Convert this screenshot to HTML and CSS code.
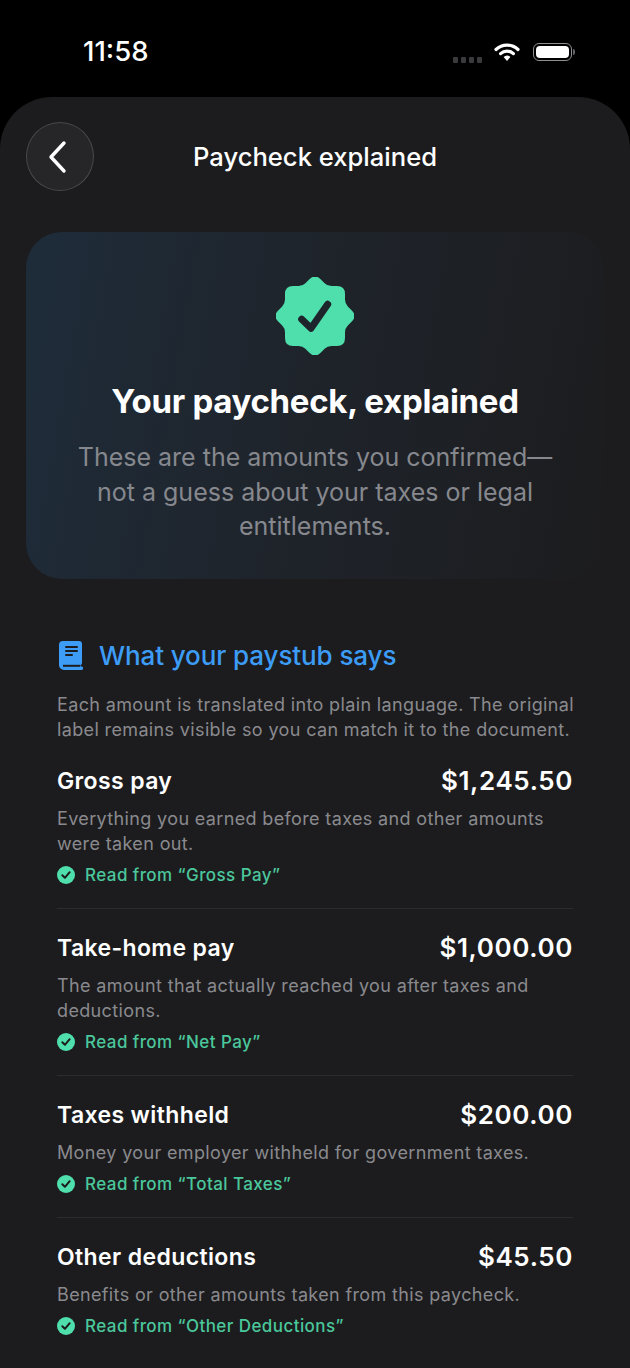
FILE: index.html
```html
<!DOCTYPE html>
<html lang="en">
<head>
    <meta charset="UTF-8">
    <meta name="viewport" content="width=device-width, initial-scale=1.0">
    <title>Paycheck explained</title>
    <link rel="stylesheet" href="styles.css">
</head>
<body>
    <div class="status-bar">
        <span class="time">11:58</span>
        <div class="status-icons">
            <div class="signal"><i></i><i></i><i></i><i></i></div>
            <svg class="wifi" width="26" height="20" viewBox="0 0 26 20">
                <path d="M2 7.500a16 16 0 0 1 22 0" fill="none" stroke="#fff" stroke-width="3.200" stroke-linecap="round"/>
                <path d="M6.600 11.600a9.500 9.500 0 0 1 12.800 0" fill="none" stroke="#fff" stroke-width="3.200" stroke-linecap="round"/>
                <path d="M9.600 15 13 19l3.400-4a5 5 0 0 0-6.800 0z" fill="#fff"/>
            </svg>
            <div class="battery"><div class="battery-fill"></div></div>
            <div class="battery-cap"></div>
        </div>
    </div>

    <main class="sheet">
        <header class="nav">
            <button class="back">
                <svg width="24" height="34" viewBox="0 0 24 34"><path d="M18 3 5 17l13 14" fill="none" stroke="#fff" stroke-width="3.400" stroke-linecap="round" stroke-linejoin="round"/></svg>
            </button>
            <h1 class="nav-title">Paycheck explained</h1>
        </header>

        <section class="hero">
            <svg class="badge" width="78" height="78" viewBox="0 0 78 78">
                <path d="M61 69Q69 69 69 61L69 55.400Q69 51.400 71.800 48.600L75.800 44.600Q81.400 39 75.800 33.400L71.800 29.400Q69 26.600 69 22.600L69 17Q69 9 61 9L55.400 9Q51.400 9 48.600 6.200L44.600 2.200Q39 -3.400 33.400 2.200L29.400 6.200Q26.600 9 22.600 9L17 9Q9 9 9 17L9 22.600Q9 26.600 6.200 29.400L2.200 33.400Q-3.400 39 2.200 44.600L6.200 48.600Q9 51.400 9 55.400L9 61Q9 69 17 69L22.600 69Q26.600 69 29.400 71.800L33.400 75.800Q39 81.400 44.600 75.800L48.600 71.800Q51.400 69 55.400 69Z" fill="#4fdfad"/>
                <path d="M25.700 42.300 35 51.300 51.700 27.300" fill="none" stroke="#1e242b" stroke-width="7" stroke-linecap="round" stroke-linejoin="round"/>
            </svg>
            <h2 class="hero-title">Your paycheck, explained</h2>
            <p class="hero-text">These are the amounts you confirmed—<br>not a guess about your taxes or legal<br>entitlements.</p>
        </section>

        <section class="paystub">
            <div class="section-head">
                <svg width="24" height="29" viewBox="0 0 24 29">
                    <path d="M4 0h16a3 3 0 0 1 3 3v19a2 2 0 0 1-1.500 2v1.500h1a1.500 1.500 0 0 1 0 3.500H5a5 5 0 0 1-5-5V4a4 4 0 0 1 4-4z" fill="#3d9df6"/>
                    <path d="M7 6h11M7 10h11M7 14h6" stroke="#1c1c1e" stroke-width="2" stroke-linecap="round"/>
                    <path d="M4 24.800h17" stroke="#1c1c1e" stroke-width="2"/>
                </svg>
                <h3 class="section-title">What your paystub says</h3>
            </div>
            <p class="section-text">Each amount is translated into plain language. The original<br>label remains visible so you can match it to the document.</p>

            <div class="item">
                <div class="item-top"><span class="item-name">Gross pay</span><span class="item-amount">$1,245.50</span></div>
                <p class="item-text">Everything you earned before taxes and other amounts were taken out.</p>
                <div class="source">
                    <svg width="18" height="18" viewBox="0 0 18 18"><circle cx="9" cy="9" r="9" fill="#4fdfad"/><path d="M5.300 9.300 7.900 11.800 12.700 6.200" fill="none" stroke="#1c1c1e" stroke-width="2" stroke-linecap="round" stroke-linejoin="round"/></svg>
                    <span>Read from “Gross Pay”</span>
                </div>
            </div>

            <div class="item">
                <div class="item-top"><span class="item-name">Take-home pay</span><span class="item-amount">$1,000.00</span></div>
                <p class="item-text">The amount that actually reached you after taxes and deductions.</p>
                <div class="source">
                    <svg width="18" height="18" viewBox="0 0 18 18"><circle cx="9" cy="9" r="9" fill="#4fdfad"/><path d="M5.300 9.300 7.900 11.800 12.700 6.200" fill="none" stroke="#1c1c1e" stroke-width="2" stroke-linecap="round" stroke-linejoin="round"/></svg>
                    <span>Read from “Net Pay”</span>
                </div>
            </div>

            <div class="item">
                <div class="item-top"><span class="item-name">Taxes withheld</span><span class="item-amount">$200.00</span></div>
                <p class="item-text">Money your employer withheld for government taxes.</p>
                <div class="source">
                    <svg width="18" height="18" viewBox="0 0 18 18"><circle cx="9" cy="9" r="9" fill="#4fdfad"/><path d="M5.300 9.300 7.900 11.800 12.700 6.200" fill="none" stroke="#1c1c1e" stroke-width="2" stroke-linecap="round" stroke-linejoin="round"/></svg>
                    <span>Read from “Total Taxes”</span>
                </div>
            </div>

            <div class="item">
                <div class="item-top"><span class="item-name">Other deductions</span><span class="item-amount">$45.50</span></div>
                <p class="item-text">Benefits or other amounts taken from this paycheck.</p>
                <div class="source">
                    <svg width="18" height="18" viewBox="0 0 18 18"><circle cx="9" cy="9" r="9" fill="#4fdfad"/><path d="M5.300 9.300 7.900 11.800 12.700 6.200" fill="none" stroke="#1c1c1e" stroke-width="2" stroke-linecap="round" stroke-linejoin="round"/></svg>
                    <span>Read from “Other Deductions”</span>
                </div>
            </div>
        </section>
    </main>
</body>
</html>
```

FILE: styles.css
```css
html, body {
    margin: 0;
    height: 1368px;
    overflow: hidden;
}
body {
    font-family: Inter, "Liberation Sans", sans-serif;
    background-color: #000;
    color: #fff;
}
h1, h2, h3, p {
    margin: 0;
}
.status-bar {
    height: 97px;
    display: flex;
    justify-content: space-between;
    align-items: flex-start;
    padding: 0 55px 0 83px;
    box-sizing: border-box;
}
.time {
    margin-top: 36px;
    font-size: 27.500px;
    line-height: 30px;
    font-weight: 500;
}
.status-icons {
    display: flex;
    align-items: center;
    margin-top: 41px;
}
.signal {
    display: flex;
    gap: 3px;
    margin: 16px 12px 0 0;
}
.signal i {
    width: 5px;
    height: 6px;
    border-radius: 1px;
    background: #3a3a3c;
}
.wifi {
    margin-right: 13px;
}
.battery {
    border: 1.500px solid #8e8e93;
    border-radius: 6px;
    padding: 2px;
    width: 33px;
    height: 12px;
}
.battery-fill {
    width: 100%;
    height: 100%;
    background: #fff;
    border-radius: 4px;
}
.battery-cap {
    width: 2px;
    height: 6px;
    margin-left: 1px;
    background: #636366;
    border-radius: 0 2px 2px 0;
}
.sheet {
    height: 1271px;
    background: #1c1c1e;
    border-radius: 52px 52px 0 0;
    padding: 25px 26px 0;
    box-sizing: border-box;
}
.nav {
    display: flex;
    align-items: center;
    position: relative;
    height: 69px;
}
.back {
    width: 68px;
    height: 69px;
    border-radius: 50%;
    border: 1px solid #48484a;
    background: #262628;
    display: flex;
    align-items: center;
    justify-content: center;
    padding: 0 4px 0 0;
}
.nav-title {
    position: absolute;
    left: 0;
    right: 0;
    text-align: center;
    font-size: 25.600px;
    font-weight: 500;
    pointer-events: none;
}
.hero {
    margin-top: 41px;
    height: 347px;
    box-sizing: border-box;
    padding-top: 45px;
    border-radius: 36px;
    background: linear-gradient(100deg, #1e2c3a 0%, #1f252d 40%, #1c1c1e 100%);
    text-align: center;
    display: flex;
    flex-direction: column;
    align-items: center;
}
.hero-title {
    margin-top: 24px;
    font-size: 33px;
    line-height: 44px;
    font-weight: 700;
    letter-spacing: -0.300px;
}
.hero-text {
    margin-top: 17px;
    font-size: 25px;
    line-height: 34.500px;
    color: #86888e;
}
.paystub {
    margin-top: 58px;
    padding: 0 31px;
}
.section-head {
    display: flex;
    align-items: center;
    gap: 16px;
    padding-left: 2px;
    height: 36px;
}
.section-title {
    font-size: 26px;
    font-weight: 500;
    letter-spacing: -0.100px;
    color: #3d9df6;
}
.section-text {
    margin-top: 19px;
    font-size: 18px;
    line-height: 25px;
    letter-spacing: 0.360px;
    white-space: nowrap;
    color: #8a8a8e;
}
.item {
    padding: 23px 0 23px;
    border-bottom: 1px solid #2c2c2e;
}
.item:first-of-type {
    padding-top: 17px;
}
.item:last-child {
    border-bottom: 0;
}
.item-top {
    display: flex;
    justify-content: space-between;
    align-items: center;
}
.item-name {
    font-size: 23px;
    font-weight: 600;
    letter-spacing: 0.380px;
}
.item-amount {
    font-size: 26px;
    font-weight: 600;
    letter-spacing: 0.600px;
}
.item-text {
    margin-top: 10px;
    font-size: 18px;
    line-height: 25px;
    letter-spacing: 0.360px;
    color: #8a8a8e;
}
.source {
    display: flex;
    align-items: center;
    gap: 10px;
    margin-top: 9px;
    font-size: 17px;
    font-weight: 500;
    letter-spacing: 0.430px;
    color: #4bc79c;
}
```
